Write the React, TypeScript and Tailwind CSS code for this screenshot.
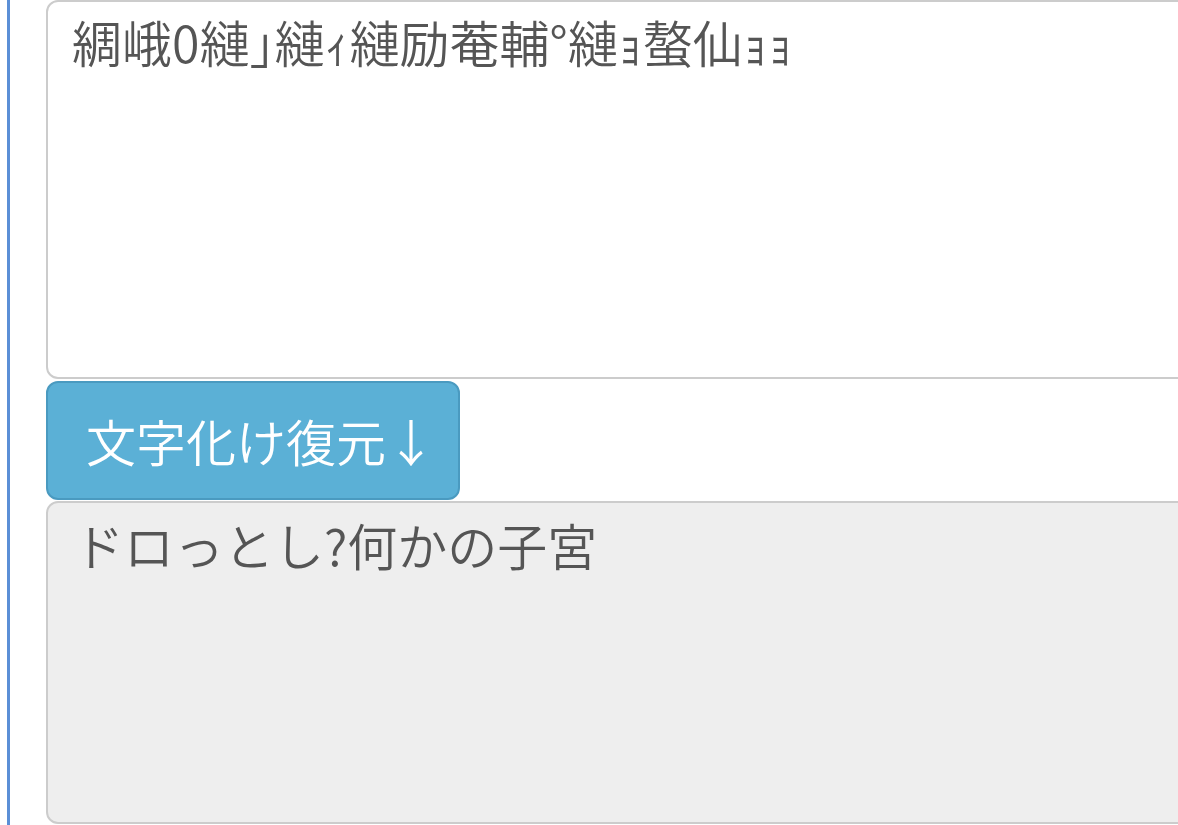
import React from 'react';

const font = { fontFamily: '"Noto Sans CJK JP", "Noto Sans", sans-serif' };

// garbled input as it appears in the screenshot
const garbled = '綢峨0縺｣縺ｨ縺励菴輔°縺ｮ螯仙ｮｮ';
const restored = 'ドロっとし?何かの子宮';

export default function App() {
  return (
    <div className="h-[825px] w-[1178px] overflow-hidden bg-white" style={font}>
      <div className="ml-[7px] flex h-full flex-col border-l-[3px] border-[#5b8fd6] pl-[36px]">
        <textarea
          readOnly
          defaultValue={garbled}
          className="h-[379px] w-[1200px] shrink-0 resize-none rounded-[12px] border-2 border-[#cccccc] bg-white px-[24px] py-[4px] text-[50px] font-[350] leading-[1.4] text-[#555555] outline-none"
        />
        <button className="mt-[2px] flex h-[119px] w-[414px] shrink-0 items-center justify-start rounded-[12px] border-2 border-[#4a9ac0] bg-[#5bb0d6] pl-[38px] text-[50px] font-[350] whitespace-nowrap text-white">
          文字化け復元↓
        </button>
        <textarea
          readOnly
          defaultValue={restored}
          className="mt-[1px] h-[323px] w-[1200px] shrink-0 resize-none rounded-[12px] border-2 border-[#cccccc] bg-[#eeeeee] px-[26px] py-[6px] text-[50px] font-[350] leading-[1.4] text-[#555555] outline-none"
        />
      </div>
    </div>
  );
}
